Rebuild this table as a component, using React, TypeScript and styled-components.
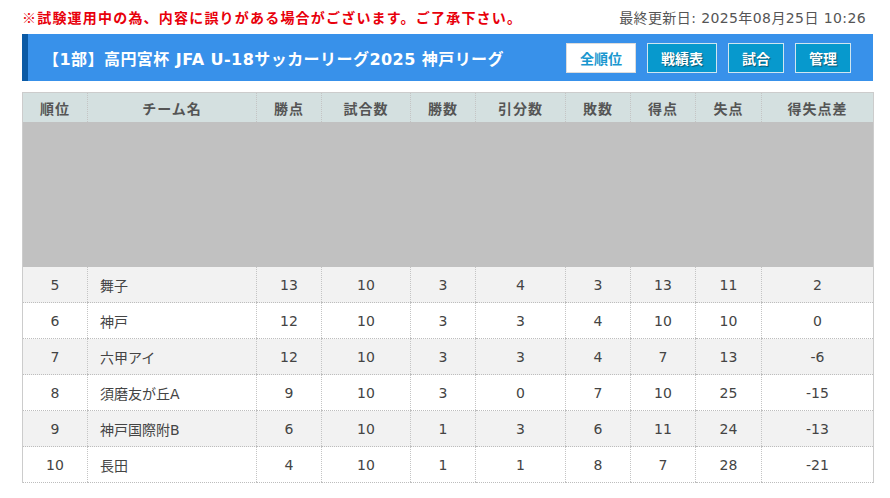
import React from "react";
import styled, { createGlobalStyle } from "styled-components";

const Global = createGlobalStyle`
  html, body { margin: 0; padding: 0; background: #fff; }
  body { font-family: "DejaVu Sans", "Noto Sans CJK JP", sans-serif; }
`;

const Page = styled.div`
  padding: 0 17px 0 22px;
`;

const TopRow = styled.div`
  height: 34px;
  display: flex;
  align-items: center;
  justify-content: space-between;
`;

const Warning = styled.div`
  color: #e8000b;
  font-family: "Noto Sans CJK JP", sans-serif;
  font-weight: 700;
  font-size: 14px;
  letter-spacing: 1.2px;
  margin-top: -1px;
`;

const Updated = styled.div`
  color: #555;
  font-size: 14px;
  letter-spacing: 0.4px;
  padding-right: 7px;
  margin-top: -1px;
`;

const TitleBar = styled.div`
  height: 47px;
  background: #3891ea;
  border-left: 6px solid #0b5aa5;
  display: flex;
  align-items: center;
  justify-content: space-between;
  padding: 0 22px 0 15px;
  box-sizing: border-box;
`;

const Title = styled.h1`
  margin: 0;
  color: #fff;
  font-size: 16px;
  font-weight: 700;
  letter-spacing: 0.45px;
`;

const Nav = styled.div`
  display: flex;
  gap: 11px;
  margin-top: 1px;
`;

const NavButton = styled.a<{ $active?: boolean }>`
  height: 30px;
  box-sizing: border-box;
  padding: 0 13px;
  display: flex;
  align-items: center;
  justify-content: center;
  border: 1px solid ${(p) => (p.$active ? "#dcdcdc" : "#cfe6f0")};
  background: ${(p) => (p.$active ? "#fff" : "#0799cd")};
  color: ${(p) => (p.$active ? "#1a97cf" : "#fff")};
  font-size: 14px;
  font-weight: 700;
  text-shadow: ${(p) => (p.$active ? "none" : "1px 1px 1px rgba(0,0,0,0.45)")};
  cursor: pointer;
`;

const Table = styled.table`
  margin-top: 11px;
  width: 851px;
  border-collapse: collapse;
  table-layout: fixed;
  border-left: 1px solid #ccc;
  border-right: 1px solid #ccc;
`;

const Th = styled.th`
  height: 29px;
  padding: 0;
  background: #d4e0e0;
  color: #555;
  font-size: 14px;
  font-weight: 700;
  letter-spacing: 1px;
  text-align: center;
  border-top: 1px solid #ccc;
  border-left: 1px dotted #c4c4c4;
  &:first-child { border-left: none; }
`;

const AdRow = styled.td`
  height: 145px;
  padding: 0;
  background: #c1c1c1;
`;

const Tr = styled.tr<{ $odd: boolean }>`
  background: ${(p) => (p.$odd ? "#f2f2f2" : "#fff")};
`;

const Td = styled.td<{ $left?: boolean }>`
  height: 35px;
  padding: 0 0 0 ${(p) => (p.$left ? "12px" : "0")};
  text-align: ${(p) => (p.$left ? "left" : "center")};
  color: #444;
  font-size: 14px;
  border-bottom: 1px dotted #bdbdbd;
  border-left: 1px dotted #c4c4c4;
  &:first-child { border-left: none; }
`;

const widths = [65, 169, 65, 89, 65, 90, 65, 65, 66, 112];
const headers = ["順位", "チーム名", "勝点", "試合数", "勝数", "引分数", "敗数", "得点", "失点", "得失点差"];

const rows: (string | number)[][] = [
  [5, "舞子", 13, 10, 3, 4, 3, 13, 11, 2],
  [6, "神戸", 12, 10, 3, 3, 4, 10, 10, 0],
  [7, "六甲アイ", 12, 10, 3, 3, 4, 7, 13, -6],
  [8, "須磨友が丘A", 9, 10, 3, 0, 7, 10, 25, -15],
  [9, "神戸国際附B", 6, 10, 1, 3, 6, 11, 24, -13],
  [10, "長田", 4, 10, 1, 1, 8, 7, 28, -21],
];

export default function App() {
  return (
    <Page>
      <Global />
      <TopRow>
        <Warning>※試験運用中の為、内容に誤りがある場合がございます。ご了承下さい。</Warning>
        <Updated>最終更新日: 2025年08月25日 10:26</Updated>
      </TopRow>
      <TitleBar>
        <Title>【1部】高円宮杯 JFA U-18サッカーリーグ2025 神戸リーグ</Title>
        <Nav>
          <NavButton $active>全順位</NavButton>
          <NavButton>戦績表</NavButton>
          <NavButton>試合</NavButton>
          <NavButton>管理</NavButton>
        </Nav>
      </TitleBar>
      <Table>
        <colgroup>
          {widths.map((w, i) => (
            <col key={i} style={{ width: w }} />
          ))}
        </colgroup>
        <thead>
          <tr>
            {headers.map((h) => (
              <Th key={h}>{h}</Th>
            ))}
          </tr>
        </thead>
        <tbody>
          <tr>
            <AdRow colSpan={10} />
          </tr>
          {rows.map((r, i) => (
            <Tr key={i} $odd={i % 2 === 0}>
              {r.map((c, j) => (
                <Td key={j} $left={j === 1}>
                  {c}
                </Td>
              ))}
            </Tr>
          ))}
        </tbody>
      </Table>
    </Page>
  );
}
